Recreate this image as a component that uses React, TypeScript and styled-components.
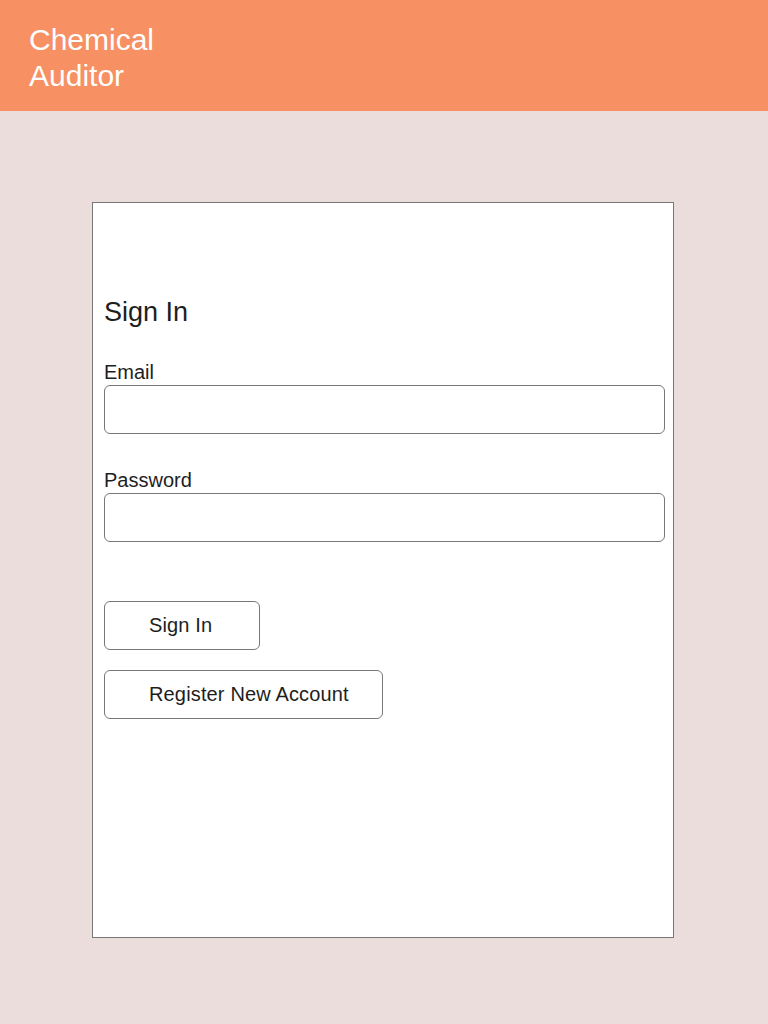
import React from "react";
import styled, { createGlobalStyle } from "styled-components";

const Global = createGlobalStyle`
  html, body { margin: 0; padding: 0; background: #ecdddd; }
  body { font-family: "Liberation Sans", Arial, Helvetica, sans-serif; }
  * { box-sizing: border-box; }
`;

const Page = styled.div`
  min-height: 1024px;
  background: #ecdddd;
  display: flex;
  flex-direction: column;
`;

const Header = styled.header`
  height: 111px;
  background: #f79063;
  padding: 22px 0 0 29px;
`;

const AppTitle = styled.h1`
  margin: 0;
  width: 170px;
  font-size: 30px;
  line-height: 36px;
  font-weight: 400;
  color: #ffffff;
`;

const Main = styled.main`
  padding: 91px 0 0 92px;
`;

const Card = styled.section`
  width: 582px;
  height: 736px;
  background: #ffffff;
  border: 1px solid #777777;
  padding: 93px 8px 0 11px;
  display: flex;
  flex-direction: column;
`;

const Title = styled.h2`
  margin: 0 0 32px;
  font-size: 27px;
  line-height: 32px;
  font-weight: 400;
  color: #1e1e1e;
`;

const Label = styled.label`
  display: block;
  font-size: 20px;
  line-height: 24px;
  color: #1e1e1e;
  margin-bottom: 1px;
`;

const Input = styled.input<{ $gap: number }>`
  display: block;
  width: 561px;
  height: 49px;
  border: 1px solid #777777;
  border-radius: 6px;
  background: #ffffff;
  margin: 0 0 ${(p) => p.$gap}px;
  padding: 0 10px;
  font-size: 20px;
  font-family: inherit;
  outline: none;
`;

const Button = styled.button<{ $width: number; $gap: number }>`
  width: ${(p) => p.$width}px;
  height: 49px;
  border: 1px solid #777777;
  border-radius: 6px;
  background: #ffffff;
  margin: 0 0 ${(p) => p.$gap}px;
  padding: 0 0 0 44px;
  text-align: left;
  font-family: inherit;
  font-size: 20px;
  letter-spacing: 0.15px;
  color: #1e1e1e;
  cursor: pointer;
`;

const Spacer = styled.div`
  height: 59px;
`;

export default function App() {
  return (
    <Page>
      <Global />
      <Header>
        <AppTitle>Chemical Auditor</AppTitle>
      </Header>
      <Main>
        <Card>
          <Title>Sign In</Title>
          <Label htmlFor="email">Email</Label>
          <Input id="email" type="email" $gap={34} />
          <Label htmlFor="password">Password</Label>
          <Input id="password" type="password" $gap={0} />
          <Spacer />
          <Button $width={156} $gap={20}>Sign In</Button>
          <Button $width={279} $gap={0}>Register New Account</Button>
        </Card>
      </Main>
    </Page>
  );
}
